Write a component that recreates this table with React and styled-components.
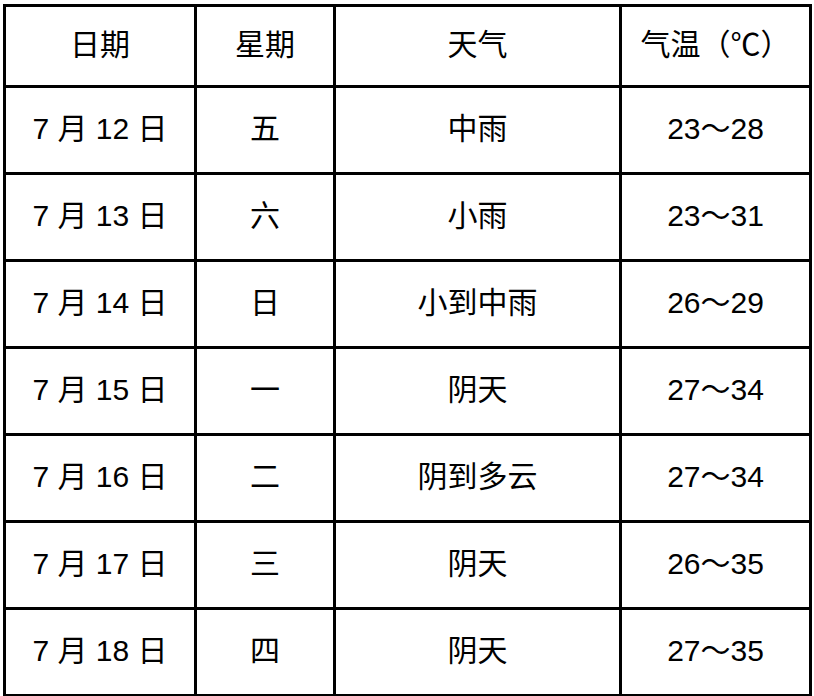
import React from "react";
import styled, { createGlobalStyle } from "styled-components";

const GlobalStyle = createGlobalStyle`
  html, body {
    margin: 0;
    padding: 0;
    background: #ffffff;
  }
  body {
    font-family: "Liberation Sans", "Noto Sans CJK SC", sans-serif;
  }
`;

const columns = [
  { title: "日期", width: 188 },
  { title: "星期", width: 136 },
  { title: "天气", width: 283 },
  { title: "气温（℃）", width: 187 },
];

const rows = [
  { date: "7 月 12 日", day: "五", weather: "中雨", temp: "23～28" },
  { date: "7 月 13 日", day: "六", weather: "小雨", temp: "23～31" },
  { date: "7 月 14 日", day: "日", weather: "小到中雨", temp: "26～29" },
  { date: "7 月 15 日", day: "一", weather: "阴天", temp: "27～34" },
  { date: "7 月 16 日", day: "二", weather: "阴到多云", temp: "27～34" },
  { date: "7 月 17 日", day: "三", weather: "阴天", temp: "26～35" },
  { date: "7 月 18 日", day: "四", weather: "阴天", temp: "27～35" },
];

const App = () => {
  return (
    <Page>
      <GlobalStyle />
      <Table>
        <thead>
          <tr>
            {columns.map((col) => (
              <HeadCell key={col.title} $width={col.width}>
                {col.title}
              </HeadCell>
            ))}
          </tr>
        </thead>
        <tbody>
          {rows.map((row) => (
            <tr key={row.date}>
              <Cell>{row.date}</Cell>
              <Cell>{row.day}</Cell>
              <Cell>{row.weather}</Cell>
              <Cell>{row.temp}</Cell>
            </tr>
          ))}
        </tbody>
      </Table>
    </Page>
  );
};

const Page = styled.div`
  padding: 4px 0 0 3px;
`;

const Table = styled.table`
  border-collapse: separate;
  border-spacing: 3px;
  background: #000000;
  table-layout: fixed;
`;

const HeadCell = styled.th`
  width: ${(props) => props.$width}px;
  height: 78px;
  padding: 0 0 2px;
  background: #ffffff;
  color: #000000;
  font-size: 30px;
  line-height: 1.2;
  font-weight: normal;
  text-align: center;
  vertical-align: middle;
  box-sizing: border-box;
`;

const Cell = styled.td`
  height: 84px;
  padding: 0 0 2px;
  background: #ffffff;
  color: #000000;
  font-size: 30px;
  line-height: 1.2;
  text-align: center;
  vertical-align: middle;
  box-sizing: border-box;
`;

export default App;
